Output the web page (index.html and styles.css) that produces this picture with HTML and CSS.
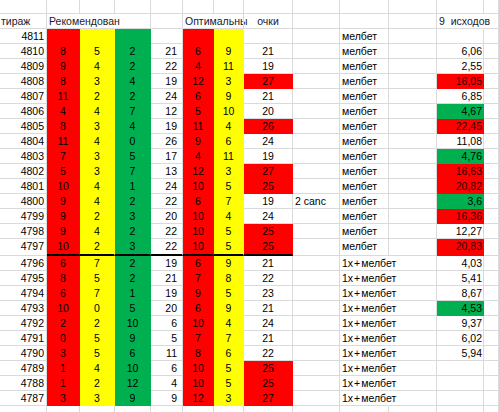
FILE: index.html
```html
<!DOCTYPE html>
<html>
<head>
<meta charset="utf-8">
<link rel="stylesheet" href="styles.css">
</head>
<body>
<div class="sheet">
  <div class="row top">
    <div class="c"></div><div class="c"></div><div class="c"></div><div class="c"></div><div class="c"></div><div class="c"></div><div class="c"></div><div class="c"></div><div class="c"></div><div class="c"></div><div class="c"></div><div class="c"></div><div class="c"></div>
  </div>
  <div class="row head">
    <div class="c lft">тираж</div><div class="c lft ov">Рекомендован</div><div class="c ov"></div><div class="c"></div><div class="c"></div><div class="c lft ov">Оптимальны</div><div class="c"></div><div class="c ctr">очки</div><div class="c"></div><div class="c"></div><div class="c"></div><div class="c lft ov">9&nbsp; исходов</div><div class="c"></div>
  </div>

  <div class="row"><div class="c num">4811</div><div class="c r"></div><div class="c y"></div><div class="c g"></div><div class="c e"></div><div class="c r"></div><div class="c y"></div><div class="c ctr"></div><div class="c"></div><div class="c lft">мелбет</div><div class="c"></div><div class="c v"></div><div class="c"></div></div>
  <div class="row"><div class="c num">4810</div><div class="c r">8</div><div class="c y">5</div><div class="c g">2</div><div class="c e">21</div><div class="c r">6</div><div class="c y">9</div><div class="c ctr">21</div><div class="c"></div><div class="c lft">мелбет</div><div class="c"></div><div class="c v">6,06</div><div class="c"></div></div>
  <div class="row"><div class="c num">4809</div><div class="c r">9</div><div class="c y">4</div><div class="c g">2</div><div class="c e">22</div><div class="c r">4</div><div class="c y">11</div><div class="c ctr">19</div><div class="c"></div><div class="c lft">мелбет</div><div class="c"></div><div class="c v">2,55</div><div class="c"></div></div>
  <div class="row"><div class="c num">4808</div><div class="c r">8</div><div class="c y">3</div><div class="c g">4</div><div class="c e">19</div><div class="c r">12</div><div class="c y">3</div><div class="c ctr r">27</div><div class="c"></div><div class="c lft">мелбет</div><div class="c"></div><div class="c v r">16,05</div><div class="c"></div></div>
  <div class="row"><div class="c num">4807</div><div class="c r">11</div><div class="c y">2</div><div class="c g">2</div><div class="c e">24</div><div class="c r">6</div><div class="c y">9</div><div class="c ctr">21</div><div class="c"></div><div class="c lft">мелбет</div><div class="c"></div><div class="c v">6,85</div><div class="c"></div></div>
  <div class="row"><div class="c num">4806</div><div class="c r">4</div><div class="c y">4</div><div class="c g">7</div><div class="c e">12</div><div class="c r">5</div><div class="c y">10</div><div class="c ctr">20</div><div class="c"></div><div class="c lft">мелбет</div><div class="c"></div><div class="c v g">4,67</div><div class="c"></div></div>
  <div class="row"><div class="c num">4805</div><div class="c r">8</div><div class="c y">3</div><div class="c g">4</div><div class="c e">19</div><div class="c r">11</div><div class="c y">4</div><div class="c ctr r">26</div><div class="c"></div><div class="c lft">мелбет</div><div class="c"></div><div class="c v r">22,45</div><div class="c"></div></div>
  <div class="row"><div class="c num">4804</div><div class="c r">11</div><div class="c y">4</div><div class="c g">0</div><div class="c e">26</div><div class="c r">9</div><div class="c y">6</div><div class="c ctr">24</div><div class="c"></div><div class="c lft">мелбет</div><div class="c"></div><div class="c v">11,08</div><div class="c"></div></div>
  <div class="row"><div class="c num">4803</div><div class="c r">7</div><div class="c y">3</div><div class="c g">5</div><div class="c e">17</div><div class="c r">4</div><div class="c y">11</div><div class="c ctr">19</div><div class="c"></div><div class="c lft">мелбет</div><div class="c"></div><div class="c v g">4,76</div><div class="c"></div></div>
  <div class="row"><div class="c num">4802</div><div class="c r">5</div><div class="c y">3</div><div class="c g">7</div><div class="c e">13</div><div class="c r">12</div><div class="c y">3</div><div class="c ctr r">27</div><div class="c"></div><div class="c lft">мелбет</div><div class="c"></div><div class="c v r">16,63</div><div class="c"></div></div>
  <div class="row"><div class="c num">4801</div><div class="c r">10</div><div class="c y">4</div><div class="c g">1</div><div class="c e">24</div><div class="c r">10</div><div class="c y">5</div><div class="c ctr r">25</div><div class="c"></div><div class="c lft">мелбет</div><div class="c"></div><div class="c v r">20,82</div><div class="c"></div></div>
  <div class="row"><div class="c num">4800</div><div class="c r">9</div><div class="c y">4</div><div class="c g">2</div><div class="c e">22</div><div class="c r">6</div><div class="c y">7</div><div class="c ctr">19</div><div class="c lft">2 canc</div><div class="c lft">мелбет</div><div class="c"></div><div class="c v g">3,6</div><div class="c"></div></div>
  <div class="row"><div class="c num">4799</div><div class="c r">9</div><div class="c y">2</div><div class="c g">3</div><div class="c e">20</div><div class="c r">10</div><div class="c y">4</div><div class="c ctr">24</div><div class="c"></div><div class="c lft">мелбет</div><div class="c"></div><div class="c v r">16,36</div><div class="c"></div></div>
  <div class="row"><div class="c num">4798</div><div class="c r">9</div><div class="c y">4</div><div class="c g">2</div><div class="c e">22</div><div class="c r">10</div><div class="c y">5</div><div class="c ctr r">25</div><div class="c"></div><div class="c lft">мелбет</div><div class="c"></div><div class="c v">12,27</div><div class="c"></div></div>
  <div class="row thick"><div class="c num">4797</div><div class="c r k">10</div><div class="c y k">2</div><div class="c g k">3</div><div class="c e k">22</div><div class="c r k">10</div><div class="c y k">5</div><div class="c ctr r k">25</div><div class="c"></div><div class="c lft">мелбет</div><div class="c"></div><div class="c v r">20,83</div><div class="c"></div></div>

  <div class="row"><div class="c num">4796</div><div class="c r">6</div><div class="c y">7</div><div class="c g">2</div><div class="c e">19</div><div class="c r">6</div><div class="c y">9</div><div class="c ctr">21</div><div class="c"></div><div class="c lft ov">1x<span class="pl">+</span>мелбет</div><div class="c"></div><div class="c v">4,03</div><div class="c"></div></div>
  <div class="row"><div class="c num">4795</div><div class="c r">8</div><div class="c y">5</div><div class="c g">2</div><div class="c e">21</div><div class="c r">7</div><div class="c y">8</div><div class="c ctr">22</div><div class="c"></div><div class="c lft ov">1x<span class="pl">+</span>мелбет</div><div class="c"></div><div class="c v">5,41</div><div class="c"></div></div>
  <div class="row"><div class="c num">4794</div><div class="c r">6</div><div class="c y">7</div><div class="c g">1</div><div class="c e">19</div><div class="c r">9</div><div class="c y">5</div><div class="c ctr">23</div><div class="c"></div><div class="c lft ov">1x<span class="pl">+</span>мелбет</div><div class="c"></div><div class="c v">8,67</div><div class="c"></div></div>
  <div class="row"><div class="c num">4793</div><div class="c r">10</div><div class="c y">0</div><div class="c g">5</div><div class="c e">20</div><div class="c r">6</div><div class="c y">9</div><div class="c ctr">21</div><div class="c"></div><div class="c lft ov">1x<span class="pl">+</span>мелбет</div><div class="c"></div><div class="c v g">4,53</div><div class="c"></div></div>
  <div class="row"><div class="c num">4792</div><div class="c r">2</div><div class="c y">2</div><div class="c g">10</div><div class="c e">6</div><div class="c r">10</div><div class="c y">4</div><div class="c ctr">24</div><div class="c"></div><div class="c lft ov">1x<span class="pl">+</span>мелбет</div><div class="c"></div><div class="c v">9,37</div><div class="c"></div></div>
  <div class="row"><div class="c num">4791</div><div class="c r">0</div><div class="c y">5</div><div class="c g">9</div><div class="c e">5</div><div class="c r">7</div><div class="c y">7</div><div class="c ctr">21</div><div class="c"></div><div class="c lft ov">1x<span class="pl">+</span>мелбет</div><div class="c"></div><div class="c v">6,02</div><div class="c"></div></div>
  <div class="row"><div class="c num">4790</div><div class="c r">3</div><div class="c y">5</div><div class="c g">6</div><div class="c e">11</div><div class="c r">8</div><div class="c y">6</div><div class="c ctr">22</div><div class="c"></div><div class="c lft ov">1x<span class="pl">+</span>мелбет</div><div class="c"></div><div class="c v">5,94</div><div class="c"></div></div>
  <div class="row"><div class="c num">4789</div><div class="c r">1</div><div class="c y">4</div><div class="c g">10</div><div class="c e">6</div><div class="c r">10</div><div class="c y">5</div><div class="c ctr r">25</div><div class="c"></div><div class="c lft ov">1x<span class="pl">+</span>мелбет</div><div class="c"></div><div class="c v"></div><div class="c"></div></div>
  <div class="row"><div class="c num">4788</div><div class="c r">1</div><div class="c y">2</div><div class="c g">12</div><div class="c e">4</div><div class="c r">10</div><div class="c y">5</div><div class="c ctr r">25</div><div class="c"></div><div class="c lft ov">1x<span class="pl">+</span>мелбет</div><div class="c"></div><div class="c v"></div><div class="c"></div></div>
  <div class="row"><div class="c num">4787</div><div class="c r">3</div><div class="c y">3</div><div class="c g">9</div><div class="c e">9</div><div class="c r">12</div><div class="c y">3</div><div class="c ctr r">27</div><div class="c"></div><div class="c lft ov">1x<span class="pl">+</span>мелбет</div><div class="c"></div><div class="c v"></div><div class="c"></div></div>
  <div class="row">
    <div class="c"></div><div class="c"></div><div class="c"></div><div class="c"></div><div class="c"></div><div class="c"></div><div class="c"></div><div class="c"></div><div class="c"></div><div class="c"></div><div class="c"></div><div class="c"></div><div class="c"></div>
  </div>
</div>
</body>
</html>
```

FILE: styles.css
```css
html, body {
  margin: 0;
  padding: 0;
  background: #ffffff;
}

body {
  width: 499px;
  height: 412px;
  overflow: hidden;
  font-family: "Liberation Sans", Arial, sans-serif;
  font-size: 10.5px;
  color: #000;
}

.sheet {
  display: flex;
  flex-direction: column;
}

.row {
  display: grid;
  grid-template-columns: 47px 33px 35px 36px 32px 31px 30px 49px 47px 49px 48px 47px 1fr;
  height: 15px;
}

.row.top {
  height: 14px;
}

.row.thick {
  height: 17px;
}

.c {
  box-sizing: border-box;
  border-right: 1px solid #dadada;
  border-bottom: 1px solid #dadada;
  line-height: 14px;
  white-space: nowrap;
  overflow: visible;
  text-align: center;
  padding: 0;
}

.head .c {
  color: #1a1a2e;
}

.num {
  text-align: right;
  padding-right: 2px;
}

.e {
  text-align: right;
  padding-right: 5px;
}

.v {
  text-align: right;
  padding-right: 1px;
}

.lft {
  text-align: left;
  padding-left: 2px;
}

.head .c:first-child {
  padding-left: 1px;
}

.ctr {
  text-align: center;
}

.ov {
  border-right-color: transparent;
}

.r {
  background: #ff0000;
  border-color: #ff0000;
}

.y {
  background: #ffff00;
  border-color: #ffff00;
}

.g {
  background: #00b050;
  border-color: #00b050;
}

.v.r {
  color: #2a0000;
}

.k {
  border-bottom: 2px solid #000;
}

.pl {
  padding: 0 1px;
}
```
